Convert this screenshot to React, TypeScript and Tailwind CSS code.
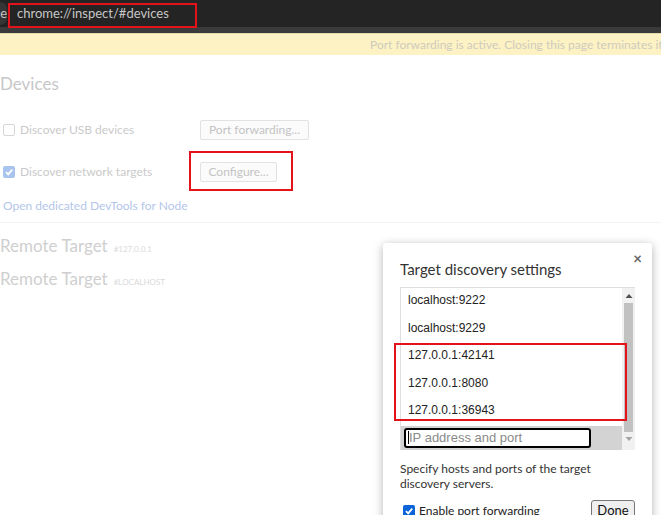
import React from "react";

const ui = { fontFamily: "Lato, 'Noto Sans', sans-serif" };
const arial = { fontFamily: "'Liberation Sans', Arial, sans-serif" };

function FadedCheckbox({ checked }: { checked?: boolean }) {
  return checked ? (
    <span className="flex h-[12px] w-[12px] items-center justify-center rounded-[2px] bg-[#a8c4ee]">
      <svg width="10" height="10" viewBox="0 0 10 10">
        <path d="M2 5.2 L4.2 7.4 L8.2 2.6" fill="none" stroke="#fff" strokeWidth="1.8" />
      </svg>
    </span>
  ) : (
    <span className="block h-[12px] w-[12px] rounded-[2px] border border-[#d6d6d6] bg-white" />
  );
}

export default function App() {
  const items = ["localhost:9222", "localhost:9229", "127.0.0.1:42141", "127.0.0.1:8080", "127.0.0.1:36943"];
  return (
    <div className="relative h-[515px] w-[661px] overflow-hidden bg-white" style={ui}>
      {/* top bar */}
      <div className="flex h-[27px] items-center bg-[#242424]">
        <div className="flex h-[23px] w-[7px] items-center justify-end overflow-hidden rounded-r-full bg-[#353535]">
          <span className="text-[13px] text-[#c4c4c4]">e</span>
        </div>
        <span className="ml-[10px] text-[13px] text-[#c6c6c6]">chrome://inspect/#devices</span>
      </div>
      <div className="h-[6px] bg-[#3a3a3a]" />
      <div className="flex h-[22px] items-center overflow-hidden whitespace-nowrap border-t border-[#e8dcaa] bg-[#fdf2c4] pl-[370px] text-[12px] text-[#cfcbbd]">
        Port forwarding is active. Closing this page terminates it
      </div>

      {/* faded page */}
      <div className="flex flex-col">
        <div className="mt-[17px] flex h-[24px] items-center text-[17px] text-[#c7c7c7]">Devices</div>
        <div className="mt-[24px] flex h-[20px] items-center">
          <div className="flex w-[200px] items-center">
            <span className="ml-[3px] block"><FadedCheckbox /></span>
            <span className="ml-[5px] text-[12px] text-[#cacaca]">Discover USB devices</span>
          </div>
          <div className="flex h-[20px] w-[109px] items-center justify-center rounded-[2px] border border-[#e2e2e2] bg-[#fbfbfb] text-[12px] text-[#c3c3c3]">
            Port forwarding...
          </div>
        </div>
        <div className="mt-[22px] flex h-[20px] items-center">
          <div className="flex w-[200px] items-center">
            <span className="ml-[3px] block"><FadedCheckbox checked /></span>
            <span className="ml-[5px] text-[12px] text-[#cacaca]">Discover network targets</span>
          </div>
          <div className="flex h-[20px] w-[77px] items-center justify-center rounded-[2px] border border-[#e2e2e2] bg-[#fbfbfb] text-[12px] text-[#c3c3c3]">
            Configure...
          </div>
        </div>
        <div className="mt-[16px] flex h-[16px] items-center pl-[3px] text-[12px] text-[#b3c6ea]">
          Open dedicated DevTools for Node
        </div>
        <div className="mt-[8px] h-px bg-[#f4f4f4]" />
        <div className="mt-[10px] flex h-[20px] items-baseline">
          <span className="text-[17px] text-[#cfcfcf]">Remote Target</span>
          <span className="ml-[6px] text-[8px] text-[#dadada]">#127.0.0.1</span>
        </div>
        <div className="mt-[13px] flex h-[20px] items-baseline">
          <span className="text-[17px] text-[#cfcfcf]">Remote Target</span>
          <span className="ml-[6px] text-[8px] uppercase text-[#dadada]">#localhost</span>
        </div>
      </div>

      {/* dialog */}
      <div className="absolute left-[383px] top-[243px] w-[269px] rounded-[3px] bg-white px-[17px] pb-[20px] shadow-[0_2px_10px_rgba(0,0,0,0.3)]">
        <div className="absolute right-[10px] top-[8px] text-[15px] font-bold leading-[14px] text-[#666]">×</div>
        <div className="mt-[16px] h-[20px] text-[15px] leading-[20px] text-[#333]">Target discovery settings</div>
        <div className="mt-[8px] flex border-t border-l border-[#dedede]">
          <div className="flex w-[222px] flex-col">
            {items.map((t) => (
              <div key={t} className="h-[27.5px] pl-[7px] pt-[5px] text-[12px] leading-[14px] text-[#222]" style={arial}>
                {t}
              </div>
            ))}
            <div className="flex h-[24px] items-center bg-[#d3d3d3] pl-[3px]">
              <div className="flex h-[20px] w-[187px] items-center rounded-[3px] border-2 border-black bg-white pl-[2px]">
                <span className="h-[13px] w-px bg-black" />
                <span className="text-[13px] text-[#8a8a8a]" style={arial}>IP address and port</span>
              </div>
            </div>
          </div>
          <div className="flex w-[13px] flex-col items-center bg-[#f1f1f1]">
            <svg width="8" height="6" viewBox="0 0 8 6" className="mt-[5px]">
              <path d="M0.5 5 L4 1 L7.5 5 Z" fill="#505050" />
            </svg>
            <div className="mt-[4px] h-[129px] w-[9px] bg-[#c1c1c1]" />
            <svg width="8" height="6" viewBox="0 0 8 6" className="mt-[4px]">
              <path d="M0.5 1 L4 5 L7.5 1 Z" fill="#a3a3a3" />
            </svg>
          </div>
        </div>
        <div className="mt-[11px] text-[12px] leading-[15px] text-[#333]">
          Specify hosts and ports of the target discovery servers.
        </div>
        <div className="mt-[9px] flex items-center justify-between">
          <div className="flex items-center">
            <span className="ml-[3px] flex h-[12px] w-[12px] items-center justify-center rounded-[2px] bg-[#0b64d8]">
              <svg width="10" height="10" viewBox="0 0 10 10">
                <path d="M2 5.2 L4.2 7.4 L8.2 2.6" fill="none" stroke="#fff" strokeWidth="1.8" />
              </svg>
            </span>
            <span className="ml-[4px] text-[12px] text-[#222]">Enable port forwarding</span>
          </div>
          <div className="flex h-[22px] w-[44px] items-center justify-center rounded-[3px] border border-[#767676] bg-[#efefef] text-[13px] text-[#111]">
            Done
          </div>
        </div>
      </div>

      {/* annotations */}
      <div className="absolute left-[8px] top-[3px] h-[25px] w-[189px] border-2 border-[#e3121b]" />
      <div className="absolute left-[189px] top-[151px] h-[40px] w-[104px] border-2 border-[#e3121b]" />
      <div className="absolute left-[394px] top-[343px] h-[78px] w-[233px] border-2 border-[#e3121b]" />
    </div>
  );
}
